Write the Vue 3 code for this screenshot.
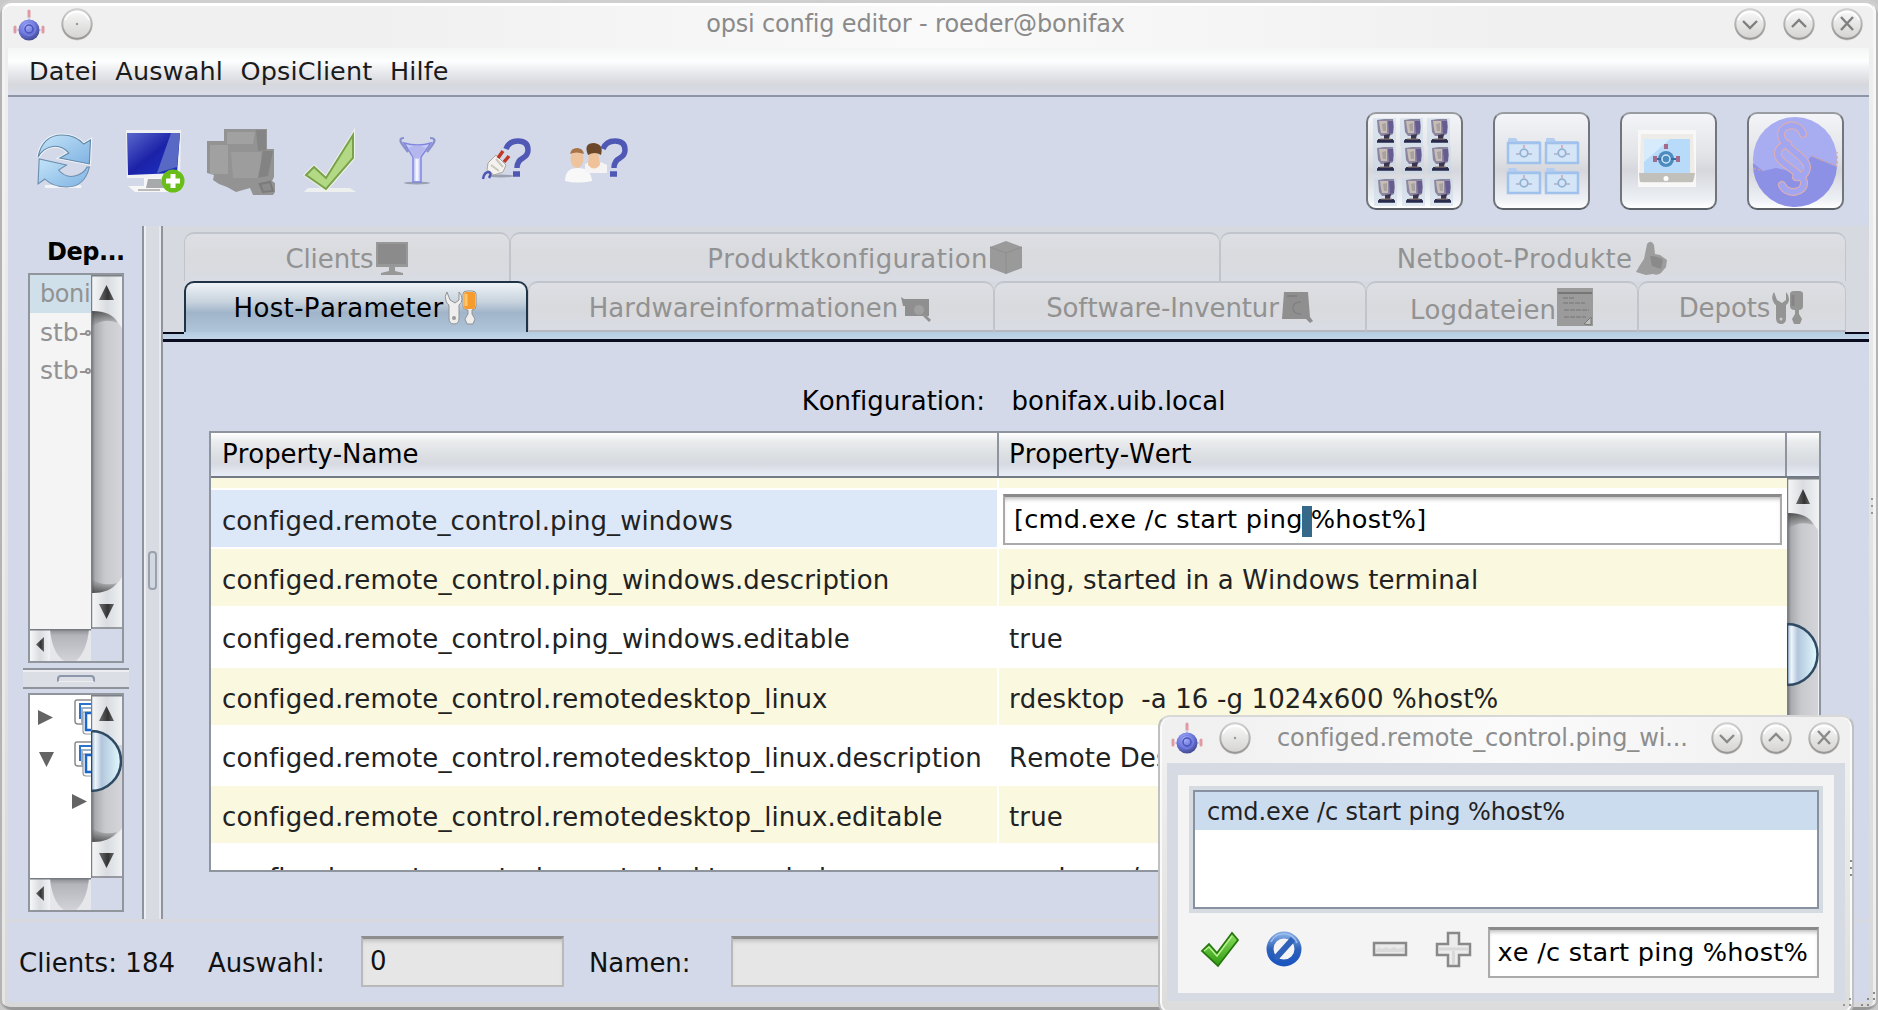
<script setup>
const menus = ['Datei', 'Auswahl', 'OpsiClient', 'Hilfe']
const rows = [
  { name: 'configed.remote_control.ping_windows', value: '', kind: 'sel' },
  { name: 'configed.remote_control.ping_windows.description', value: 'ping, started in a Windows terminal', kind: 'odd' },
  { name: 'configed.remote_control.ping_windows.editable', value: 'true', kind: 'even' },
  { name: 'configed.remote_control.remotedesktop_linux', value: 'rdesktop  -a 16 -g 1024x600 %host%', kind: 'odd' },
  { name: 'configed.remote_control.remotedesktop_linux.description', value: 'Remote Desktop', kind: 'even' },
  { name: 'configed.remote_control.remotedesktop_linux.editable', value: 'true', kind: 'odd' },
  { name: 'configed.remote_control.remotedesktop_windows', value: 'cmd.exe /c start', kind: 'even' },
]
const pcs = [[10, 5], [37, 5], [64, 5], [10, 33], [38, 33], [65, 33], [11, 65], [39, 65], [67, 65]]
const folders = [[13, 27], [51, 27], [13, 57], [51, 57]]
const winButtons = ['M9 13 L16 20 L23 13', 'M9 19 L16 12 L23 19', 'M10 9 L22 22 M22 9 L10 22']
</script>

<template>
  <div class="window">
    <svg width="0" height="0" class="defs">
      <defs>
        <linearGradient id="btn" x1="0" y1="0" x2="0" y2="1"><stop offset="0" stop-color="#fafafa" /><stop offset="1" stop-color="#d4d3d2" /></linearGradient>
        <linearGradient id="rim" x1="0" y1="0" x2="0" y2="1"><stop offset="0" stop-color="#cfcfcf" /><stop offset="1" stop-color="#979593" /></linearGradient>
        <linearGradient id="screen" x1="0" y1="0" x2="1" y2="1"><stop offset="0" stop-color="#5a68cc" /><stop offset=".5" stop-color="#1c22a8" /><stop offset="1" stop-color="#1a36c8" /></linearGradient>
        <linearGradient id="refresh" x1="0" y1="0" x2="1" y2="1"><stop offset="0" stop-color="#c3e4f8" /><stop offset="1" stop-color="#7fb2e2" /></linearGradient>
        <linearGradient id="green" x1="0" y1="0" x2="0" y2="1"><stop offset="0" stop-color="#8be05f" /><stop offset="1" stop-color="#2f9a10" /></linearGradient>
        <linearGradient id="blue" x1="0" y1="0" x2="0" y2="1"><stop offset="0" stop-color="#7fa8e2" /><stop offset=".5" stop-color="#2e62ba" /><stop offset="1" stop-color="#1b55c0" /></linearGradient>
        <linearGradient id="knob" x1="0" y1="0" x2="1" y2="0"><stop offset="0" stop-color="#9bb5cf" /><stop offset=".15" stop-color="#eef5fa" /><stop offset=".35" stop-color="#b2c6dc" /><stop offset="1" stop-color="#e2fbff" /></linearGradient>
        <linearGradient id="track" x1="0" y1="0" x2="1" y2="0"><stop offset="0" stop-color="#6c6d70" /><stop offset=".13" stop-color="#a9abaf" /><stop offset=".45" stop-color="#c8c9cd" /><stop offset="1" stop-color="#d4d5da" /></linearGradient>
        <linearGradient id="track2" x1="0" y1="0" x2="0" y2="1"><stop offset="0" stop-color="#86888c" /><stop offset=".2" stop-color="#b4b5ba" /><stop offset="1" stop-color="#d2d3d8" /></linearGradient>
        <linearGradient id="cap" x1="0" y1="0" x2="1" y2="0"><stop offset="0" stop-color="#f6f7f8" /><stop offset=".5" stop-color="#d9dce0" /><stop offset="1" stop-color="#f0f2f5" /></linearGradient>
        <linearGradient id="shade" x1="0" y1="0" x2="0" y2="1"><stop offset="0" stop-color="#333" stop-opacity=".75" /><stop offset="1" stop-color="#555" stop-opacity="0" /></linearGradient>
        <linearGradient id="shadeUp" x1="0" y1="1" x2="0" y2="0"><stop offset="0" stop-color="#333" stop-opacity=".75" /><stop offset="1" stop-color="#555" stop-opacity="0" /></linearGradient>
        <linearGradient id="arrow" x1="0" y1="0" x2="1" y2="0"><stop offset="0" stop-color="#6a6c6e" /><stop offset=".6" stop-color="#333" /><stop offset="1" stop-color="#666" /></linearGradient>
        <radialGradient id="orb" cx=".4" cy=".3" r=".7"><stop offset="0" stop-color="#a9b4fa" /><stop offset=".6" stop-color="#6872da" /><stop offset="1" stop-color="#444c90" /></radialGradient>
        <g id="logo">
          <path d="M17 2v6M3 18v5M31 18v5" stroke="#e09aa4" stroke-width="3" stroke-linecap="round" />
          <path d="M5 21h24M17 8v4" stroke="#d0d0e0" stroke-width="2" />
          <circle cx="17" cy="21" r="10.500" fill="url(#orb)" />
          <circle cx="17" cy="20" r="4" fill="none" stroke="#4a54b8" stroke-width="1.500" /><circle cx="17" cy="20" r="6.500" fill="none" stroke="#7a84e6" />
        </g>
        <g id="disc">
          <circle cx="16" cy="17.500" r="15" fill="#aaa" opacity=".5" />
          <circle cx="16" cy="16" r="14.700" fill="url(#btn)" stroke="url(#rim)" stroke-width="2" />
          <path d="M4 12a13 13 0 0 1 24 0" fill="none" stroke="#fff" stroke-width="1.500" />
        </g>
        <g id="pc">
          <path d="M-3 -1h23v28h-23z" fill="#c6d8e8" opacity=".5" />
          <path d="M1 1l7 -1 9 0 1 8 -1 7 -4 2H5l-3-4z" fill="#8c86a0" /><path d="M3 2h8v12H5l-1-5z" fill="#c6beb6" /><path d="M12 2l5 0v12l-4 1z" fill="#665c92" />
          <path d="M6 5l4-1v8l-3 0z" fill="#a9a0a0" /><path d="M8 16l6-1-1 5h4v3H2v-3h6z" fill="#3b3550" /><path d="M1 22.500h17" stroke="#26284c" stroke-width="2.500" /><path d="M4 20h11" stroke="#8e7c70" stroke-width="1" />
        </g>
        <g id="folder">
          <path d="M2 6V2q0-1 1-1h7l2 3h22v22H1V6z" fill="#b5cef0" /><path d="M2 6h32v20H2z" fill="#d3e5f6" stroke="#9fc1ec" stroke-width="2.500" />
          <circle cx="18" cy="16" r="3.800" fill="none" stroke="#93b2d2" stroke-width="1.800" /><path d="M10 17h4M22 17h4" stroke="#b0aec8" stroke-width="1.600" /><path d="M18 8v3" stroke="#d4a0aa" stroke-width="1.500" />
        </g>
        <g id="pages">
          <path d="M1 3q0-2 2-2h20v24H4q-3 0-3-3z" fill="#fff" stroke="#8a8a8a" stroke-width="1.500" />
          <path d="M6 20V5h18" fill="none" stroke="#2c73cc" stroke-width="2" /><path d="M8 25V9h16" fill="none" stroke="#9cb0c8" stroke-width="2" />
          <path d="M9 13h15v22h-12q-3 0-3-3z" fill="#fff" stroke="#999" stroke-width="1.200" /><path d="M24 14H12v17h12" fill="none" stroke="#1c66c8" stroke-width="2.500" />
        </g>
        <g id="tools">
          <path d="M3 2q-3 4-1 9 1 3 3 4v13q0 6 5 6t5-6V15q3-2 3-6 0-4-3-7v8l-4 3-5-3z" /><path d="M19 4q0-3 4-3h5q4 0 4 3v12q0 4-4 4v4l3 5-2 5h-6l-2-5 3-5v-4q-5 0-5-4z" />
        </g>
      </defs>
    </svg>

    <header class="titlebar">
      <svg class="app-logo" width="34" height="36"><use href="#logo" /></svg>
      <svg class="pin" width="32" height="34"><use href="#disc" /><circle cx="16" cy="16" r="1.200" fill="#999" /></svg>
      <div class="title">opsi config editor - roeder@bonifax</div>
      <svg v-for="d in winButtons" :key="d" class="wbtn" width="32" height="34"><use href="#disc" /><path :d="d" fill="none" stroke="#7f7f7f" stroke-width="2.400" /></svg>
    </header>

    <div class="body">
      <nav class="menubar"><span v-for="m in menus" :key="m">{{ m }}</span></nav>

      <div class="toolbar">
        <svg class="tools-left" width="640" height="80" viewBox="0 0 640 80">
          <!-- reload -->
          <g transform="translate(-11 1) scale(1.140 1)">
            <path d="M42 63h32v3H42z" fill="#f2f3f6" />
            <path d="M36 35Q40 13 57 13q12 0 19 9l6-4-1 24-26-6 8-5q-7-9-16-6-7 2-11 10z" fill="url(#refresh)" stroke="#edf3f8" stroke-width="3" /><path d="M36 35Q40 13 57 13q12 0 19 9l6-4-1 24-26-6 8-5q-7-9-16-6-7 2-11 10z" fill="url(#refresh)" stroke="#6488a8" />
            <path d="M81 45q-4 20-20 20-12 0-19-8l-6 5 1-25 24 6-7 5q6 8 14 6 8-2 11-9z" fill="url(#refresh)" stroke="#6e8eb0" />
          </g>
          <!-- add client -->
          <path d="M118 9h55l-1 48h-53z" fill="#f0f1f2" /><path d="M119 12l53 0-3 40-49 2z" fill="url(#screen)" /><path d="M163 12h9l-3 34-20 6z" fill="#5769c4" />
          <path d="M136 57h21l2 7h9l-5 7h-36l-7-6h16z" fill="#f7f7f7" /><path d="M140 58h13l3 9h-18z" fill="#a6aaab" /><path d="M130 69h22" stroke="#bbb" stroke-width="2" />
          <circle cx="165" cy="60" r="11.500" fill="#68bd19" /><path d="M165 53v14M158 60h14" stroke="#fff" stroke-width="5" />
          <!-- disabled group -->
          <path d="M199 20h17V8h43v20h7v28l-2 4 3 2v9l-2 3h-20l-3-7-14 4-9-5-8-3-6-4 1-5-7-2z" fill="#939393" />
          <path d="M219 11h28l-2 12h-26zM202 24h18v29h-18z" fill="#a1a1a1" /><path d="M248 9h10v20l-8 1z" fill="#858585" /><path d="M223 31h30v26h-28z" fill="#9d9d9d" /><path d="M255 30h10l-5 25-10 2z" fill="#838383" /><path d="M250 62l12-2 4 10h-13z" fill="#8b8b8b" /><path d="M252 63l10-2 3 9-10 1z" fill="none" stroke="#7b7b7b" stroke-width="2" />
          <!-- confirm -->
          <path d="M300 67h42l6 4h-52z" fill="#eef0ef" /><path d="M298 54l8-8 12 11 27-43v23l-27 31z" fill="#b7dc89" stroke="#eef3e9" stroke-width="4" /><path d="M298 54l8-8 12 11 27-43v23l-27 31z" fill="#b4d984" stroke="#7aa24d" stroke-width="2" />
          <!-- filter -->
          <ellipse cx="409" cy="62" rx="13" ry="1.500" fill="#99a0b2" /><path d="M396 22l9 14v25h8V36l10-14q-13 4-27 0z" fill="#c9cdf4" stroke="#8187df" stroke-width="1.500" /><path d="M400 27q9-5 18 0l-7 10h-5z" fill="#b4b7ee" /><path d="M396 17q-6 0-2 6l6 8M422 17q7 0 3 6l-6 8" fill="none" stroke="#8790cb" stroke-width="2.200" /><path d="M409 38v22" stroke="#f2f4ff" stroke-width="3" />
          <!-- licence usage -->
          <ellipse cx="493" cy="55" rx="13" ry="1.500" fill="#9ba1b1" /><path d="M480 42l8-8 10 10-3 7-9 3-7-5z" fill="#f4f2ee" stroke="#aaa69e" /><path d="M483 44l8 6M488 38l7 8" stroke="#ccc7be" stroke-width="2" /><path d="M490 37l5-7M496 41l5-6" stroke="#bf3727" stroke-width="3.500" /><path d="M475 58q1-7 6-7 3 1 0 6" fill="none" stroke="#4e56b4" stroke-width="2.500" />
          <path id="q" d="M498 28q3-8 12-8 10 0 10 9 0 5-5 8-6 3-6 10M505 53h7" fill="none" stroke="#5058b6" stroke-width="5.500" />
          <!-- user info -->
          <path d="M557 60q0-13 13-13t14 13q-14 3-27 0z" fill="#f8f8f8" /><ellipse cx="569" cy="38" rx="6.500" ry="9" fill="#edc49d" /><path d="M562 33q1-6 7-6t7 6q-8-3-14 0z" fill="#a77448" />
          <path d="M577 52V43l5-2q6 7 11 0l6 3v8z" fill="#f5f3f3" /><path d="M581 31h9l2 13q-6 7-12 0z" fill="#efc29a" /><path d="M580 34q-5-12 6-12 10 1 7 12-6-4-13 0z" fill="#6c482b" />
          <use href="#q" x="97" />
        </svg>
        <div class="tools-right">
          <div class="bigbtn"><svg width="92" height="94"><g v-for="p in pcs" :key="p.join()" :transform="`translate(${p[0] - 2} ${p[1]})`"><use href="#pc" /></g></svg></div>
          <div class="bigbtn"><svg width="92" height="94"><g v-for="p in folders" :key="p.join()" :transform="`translate(${p[0] - 2} ${p[1] - 4})`"><use href="#folder" /></g></svg></div>
          <div class="bigbtn"><svg width="92" height="94"><path d="M16 16h58v57H16z" fill="#f8f8f8" /><path d="M19 20h52l2 44-4 5H20l-3-4z" fill="#eeece8" /><path d="M17 59h56l-2 9H18z" fill="#c2c0bb" /><path d="M22 25h46v34H22z" fill="#b8dbfa" /><path d="M22 25h26L22 48z" fill="#d6ecfc" /><circle cx="44" cy="45" r="8" fill="#4d8abe" /><circle cx="44" cy="45" r="4" fill="none" stroke="#cde7f7" stroke-width="1.500" /><path d="M44 30v5M33 42v6M56 42v6" stroke="#a46a8c" stroke-width="4" /><path d="M35 45h4M49 45h5" stroke="#326ea5" stroke-width="2" /><circle cx="44" cy="64.500" r="2.500" fill="#fff" /></svg></div>
          <div class="bigbtn"><svg width="92" height="94"><circle cx="46" cy="45" r="42" fill="#a8acf0" /><path d="M4 49l10 8 13-3 24 5 11-17 26 11A42 42 0 0 1 4 49z" fill="#8d91e6" /><path d="M4 54l10 3M62 42l26 10V38" fill="none" stroke="#cf9f9b" stroke-width="1.200" stroke-dasharray="3 2" />
            <g fill="none" stroke-linecap="round"><path id="para" d="M54 20C50 7 32 10 32 21C32 33 58 42 58 53C58 60 52 64 47 63M39 30C33 31 28 35 29 41C30 50 54 59 55 68C56 79 38 82 33 71" stroke="#d9aeb4" stroke-width="8" /><path d="M54 20C50 7 32 10 32 21C32 33 58 42 58 53C58 60 52 64 47 63M39 30C33 31 28 35 29 41C30 50 54 59 55 68C56 79 38 82 33 71" stroke="#a2a5ef" stroke-width="5.600" /></g></svg></div>
        </div>
      </div>

      <div class="main">
        <aside class="left">
          <div class="dep-title">Dep...</div>
          <div class="listbox depots">
            <div class="list-col">
              <ul><li class="active">boni</li><li>stb-<i></i></li><li>stb-<i></i></li></ul>
              <svg class="hscroll" width="61" height="32"><rect width="62" height="32" fill="#e5e7ea" /><rect width="20" height="32" fill="url(#cap)" /><path d="M14 8v15L6 15.500z" fill="url(#arrow)" /><path d="M20 0h39q-2 22-13 32H34Q22 24 20 0z" fill="url(#track2)" /><path d="M0 .8h62" stroke="#777b82" stroke-width="1.500" /></svg>
            </div>
            <div class="scroll-col">
              <svg width="31" height="354"><rect width="32" height="354" fill="url(#cap)" /><path d="M0 36q20 0 31 17v249q-9 16-31 16z" fill="url(#track)" /><path d="M1 36q20 0 26 12Q12 42 1 52z" fill="url(#shade)" /><path d="M1 318q18 0 25-10Q12 312 1 304z" fill="url(#shadeUp)" /><path d="M8 25h15l-7.500-15zM8 329h15l-7.500 15z" fill="url(#arrow)" /><path d="M.5 0v354M0 .8h32M0 353h32" stroke="#7d8086" stroke-width="1.500" /></svg>
            </div>
          </div>
          <div class="hsplit"><b></b></div>
          <div class="listbox tree">
            <div class="list-col">
              <svg width="61" height="183"><path d="M8 15v15l15-7.500zM9 57h15l-7.500 15zM42 99v15l15-7.500z" fill="#646464" /><use href="#pages" x="44" y="4" /><use href="#pages" x="44" y="46" /></svg>
              <svg class="hscroll" width="61" height="32"><rect width="62" height="32" fill="#e5e7ea" /><rect width="20" height="32" fill="url(#cap)" /><path d="M14 8v15L6 15.500z" fill="url(#arrow)" /><path d="M20 0h39q-2 22-13 32H34Q22 24 20 0z" fill="url(#track2)" /><path d="M0 .8h62" stroke="#777b82" stroke-width="1.500" /></svg>
            </div>
            <div class="scroll-col">
              <svg width="31" height="183"><rect width="32" height="184" fill="url(#cap)" /><path d="M0 50h31v83q-9 14-31 14z" fill="url(#track)" /><path d="M1 147q18 0 25-10Q12 141 1 133z" fill="url(#shadeUp)" /><path d="M0 36a30 30 0 0 1 0 60z" fill="url(#knob)" stroke="#2f4a63" stroke-width="2.500" /><path d="M8 26h15l-7.500-15zM8 158h15l-7.500 15z" fill="url(#arrow)" /><path d="M.5 0v36M.5 97v86M0 .8h32M0 182h32" stroke="#7d8086" stroke-width="1.500" /></svg>
            </div>
          </div>
        </aside>
        <div class="vsplit"><b></b></div>

        <section class="right">
          <div class="tabs">
            <div class="tabrow">
              <div class="tab t1"><span>Clients</span><svg width="34" height="34"><path d="M1 1h32v25H1zM14 26h6v4l8 2v2H6v-2l8-2z" fill="#989898" /><path d="M3 3h28v20H3z" fill="#8b8b8b" /></svg></div>
              <div class="tab wide t2"><span>Produktkonfiguration</span><svg width="34" height="34"><path d="M17 0l16 6v21l-16 6-16-6V6z" fill="#9a9a9a" /><path d="M1 6l16 6 16-6M17 12v21" fill="none" stroke="#8e8e8e" /></svg></div>
              <div class="tab wide t3"><span>Netboot-Produkte</span><svg width="36" height="34"><path d="M14 3q4-5 7 1l1 9 5 1 7 5-1 7-5 6q-4 3-8 1l-7 1-10-3 4-7 4-6z" fill="#9d9d9d" /><path d="M17 15q8 0 13 4l-2 9-9-3z" fill="#8a8a8a" /></svg></div>
            </div>
            <div class="tabrow second">
              <div class="tab wide u1"><span>Host-Parameter</span><svg width="34" height="36"><g fill="#eee" stroke="#929292"><use href="#tools" /></g><rect x="20" y="2" width="11" height="17" rx="2" fill="#f79b2c" /><path d="M22 4v12" stroke="#ffc770" stroke-width="3" /><circle cx="10" cy="28" r="2" fill="#999" /></svg></div>
              <div class="tab u2"><span>Hardwareinformationen</span><svg width="34" height="34"><path d="M2 7l3 2h25v17H6V16H4z" fill="#8f8f8f" /><circle cx="20" cy="20" r="5" fill="#a0a0a0" /><path d="M24 24l7 7" stroke="#929292" stroke-width="3" /></svg></div>
              <div class="tab u3"><span>Software-Inventur</span><svg width="34" height="34"><path d="M4 2h24l2 25 3 4-3 2-4-4H2z" fill="#8f8f8f" /><path d="M7 6h10" stroke="#7d7d7d" stroke-width="1.500" /><path d="M21 12q-8 0-8 6t8 6" fill="none" stroke="#828282" stroke-width="1.500" /></svg></div>
              <div class="tab u4"><span>Logdateien</span><svg width="37" height="38"><path d="M0 0h36v38H0z" fill="#9b9b9b" /><path d="M1 5h34" stroke="#777" stroke-width="2" /><path d="M6 10h12M6 15h22M7 22h25M7 29h22" stroke="#828282" stroke-width="1.500" stroke-dasharray="5 1" /><path d="M27 36l7-7v8z" fill="#c0c0c0" stroke="#777" /></svg></div>
              <div class="tab u5"><span>Depots</span><svg width="34" height="36"><g fill="#949494"><use href="#tools" /></g><path d="M22 5v11" stroke="#858585" stroke-width="3" /><circle cx="10" cy="29" r="1.500" fill="#ccc" /></svg></div>
            </div>
          </div>
          <div class="tab-line"></div>

          <div class="conf"><span class="conf-l">Konfiguration:</span><span class="conf-r">bonifax.uib.local</span></div>

          <div class="table">
            <div class="thead"><div class="c1">Property-Name</div><div class="c2">Property-Wert</div><div class="c3"></div></div>
            <div class="tbody">
              <div class="trows">
                <div class="strip"><div class="c1"></div><div class="c2"></div></div>
                <div v-for="r in rows" :key="r.name" class="tr" :class="r.kind">
                  <div class="c1">{{ r.name }}</div>
                  <div v-if="r.kind === 'sel'" class="edit"><div class="field">[cmd.exe /c start ping<mark>&nbsp;</mark>%host%]</div></div>
                  <div v-else class="c2">{{ r.value }}</div>
                </div>
              </div>
              <svg class="tscroll" width="32" height="393"><rect width="32" height="393" fill="url(#cap)" /><path d="M0 35q20 0 31 17v341H0z" fill="url(#track)" /><path d="M1 35q20 0 26 12Q12 42 1 51z" fill="url(#shade)" /><path d="M0 146a30.500 30.500 0 0 1 0 61z" fill="url(#knob)" stroke="#2f4a63" stroke-width="2.500" /><path d="M9 26h14l-7-15z" fill="url(#arrow)" /><path d="M.5 0v145M.5 208v185M0 .8h32" stroke="#7d8086" stroke-width="1.500" /></svg>
            </div>
          </div>
        </section>
      </div>

      <footer class="status">
        <span class="s1">Clients: 184</span><span class="s2">Auswahl:</span><div class="inp i1">0</div><span class="s3">Namen:</span><div class="inp i2"></div>
      </footer>
    </div>
    <svg class="grip" width="6" height="18"><path d="M3 1v2M3 8v2M3 15v2" stroke="#999" stroke-width="2" /></svg>
    <svg class="corner" width="22" height="16"><path d="M17 1h2M17 7h2M11 7h2M5 13h2M11 13h2" stroke="#888" stroke-width="2" /></svg>

    <div class="popup">
      <header class="ptitle">
        <svg class="plogo" width="34" height="36"><use href="#logo" /></svg>
        <svg class="ppin" width="32" height="34"><use href="#disc" /><circle cx="16" cy="16" r="1.200" fill="#999" /></svg>
        <div class="ptext">configed.remote_control.ping_wi...</div>
        <svg v-for="d in winButtons" :key="d" class="wbtn" width="32" height="34"><use href="#disc" /><path :d="d" fill="none" stroke="#8a8a8a" stroke-width="2.400" /></svg>
      </header>
      <div class="pbody">
        <div class="panel">
          <div class="plist"><div>cmd.exe /c start ping %host%</div></div>
          <div class="pactions">
            <svg width="285" height="44" viewBox="0 0 285 44">
              <path d="M13 20l7-7 8 9 15-20 6 7-20 26z" fill="url(#green)" stroke="#28780f" stroke-width="1.800" /><path d="M15 20l5-4 8 9L43 5" fill="none" stroke="#b6f08f" stroke-width="1.500" />
              <circle cx="95" cy="18" r="14" fill="none" stroke="url(#blue)" stroke-width="7" /><path d="M86 28l18-20" stroke="#2f62b8" stroke-width="6" /><path d="M82 11a14 14 0 0 1 26 1" fill="none" stroke="#9dbdec" stroke-width="1.500" />
              <path d="M185 12h32v12h-32z" fill="#e9e9e9" stroke="#898989" stroke-width="2.500" /><path d="M187 19l3-3 3 2 4-2 4 2 4-2 4 2 6-2v5h-28z" fill="#dadada" />
              <path d="M259 2h11v11h11v11h-11v11h-11V24h-11V13h11z" fill="#ececec" stroke="#898989" stroke-width="2.500" /><path d="M250 18h30M264.500 20v13" stroke="#d9d9d9" stroke-width="3" />
            </svg>
            <div class="pinput"><span>xe /c start ping %host%</span></div>
          </div>
        </div>
      </div>
      <svg class="pgrip" width="6" height="18"><path d="M3 1v2M3 8v2M3 15v2" stroke="#888" stroke-width="2" /></svg>
      <svg class="pcorner" width="16" height="16"><path d="M11 1h2M11 7h2M5 7h2M5 13h2" stroke="#999" stroke-width="2" /></svg>
    </div>
  </div>
</template>

<style>
body { margin: 0; overflow: hidden; background: #c9c9c9; }
</style>
<style scoped>
* { box-sizing: border-box; }
.window { position: relative; width: 1878px; height: 1010px; padding: 0 9px 8px 8px; overflow: hidden; display: flex; flex-direction: column; border-radius: 12px 12px 10px 10px; background: linear-gradient(#f0f0f0, #e9e9e9 30%, #d8d8d8); box-shadow: inset 0 3px 0 #cfcfcf, inset 2px 0 0 #b4b4b4, inset -2px 0 0 #b4b4b4, inset 0 -3px 0 #979797, inset 5px 6px 0 #fbfbfb66, inset -5px 0 0 #fbfbfb99; font: 26px "DejaVu Sans", sans-serif; font-kerning: none; font-variant-ligatures: none; color: #000; white-space: pre; }
.defs { position: absolute; }
svg { display: block; flex: none; overflow: hidden; }
.titlebar { height: 48px; flex: none; margin: 0 -4px; display: flex; background: linear-gradient(90deg, #f0f0f0 20%, #fafafa 50%, #f0f0f0 80%); border-top: 3px solid #cfcfcf; border-radius: 8px 8px 0 0; box-shadow: inset 0 3px #fff; }
.app-logo { margin: 6px 0 0 8px; }
.pin { margin: 5px 0 0 15px; }
.title { width: 1641px; flex: none; text-align: center; font-size: 24px; letter-spacing: -.17px; line-height: 42px; color: #8a8a8a; padding-left: 4px; }
.wbtn { margin: 5px 16.500px 0 0; }
.body { flex: 1; display: flex; flex-direction: column; min-height: 0; background: #d3d9e9; }
.menubar { height: 49px; flex: none; display: flex; gap: 17.500px; padding-left: 21px; line-height: 46px; font-size: 25.500px; letter-spacing: .15px; color: #1b1b1b; background: linear-gradient(#f4f5f5, #fdfefe 28%, #e5e7eb 55%, #d6d8dd 78%, #d9dde8); border-bottom: 2px solid #8d96a6; }
.toolbar { height: 126px; flex: none; display: flex; justify-content: space-between; padding: 15px 25px 0 0; }
.tools-left { margin: 9px 0 0 0; }
.tools-right { display: flex; gap: 30px; }
.bigbtn { width: 97px; height: 98px; border: 2.500px solid; border-color: #999da1 #72767c #5b5f66; border-radius: 10px; background: linear-gradient(#f3f4f7, #e2e3e7 45%, #d5d7dc 60%, #eceff3 90%, #fff); overflow: hidden; }
.main { height: 696px; flex: none; display: flex; }
.left { width: 134px; flex: none; padding: 12px 0 0 15px; }
.dep-title { font-weight: bold; font-size: 24px; letter-spacing: -.5px; line-height: 34px; height: 38px; padding-left: 24px; }
.listbox { margin-left: 5px; width: 96px; border: 2px solid #91959c; display: flex; background: #d3d9e9; }
.depots { height: 390px; }
.list-col { width: 61px; background: #f4f4f4; display: flex; flex-direction: column; overflow: hidden; height: 100%; }
.list-col ul { list-style: none; margin: 0; padding: 0; flex: 1; }
.list-col li { height: 38px; line-height: 37px; padding-left: 10px; color: #929292; overflow: hidden; letter-spacing: 0; font-size: 25px; display: flex; align-items: center; }
.list-col li.active { background: #cfe0ea; font-size: 24px; letter-spacing: -.4px; }
.list-col li i { width: 6px; height: 6px; flex: none; border: 2px solid #929292; border-radius: 3px; margin: 1px 0 0 -3px; }
.tree .list-col { background: #fff; }
.scroll-col { width: 31px; }
.hscroll { margin-top: auto; }
.hsplit { width: 106px; height: 21px; margin: 5px 0 4px; background: #dbdee5; border: 2px solid #8f939b; border-width: 2px 0; box-shadow: inset 0 2px #eceef2; padding: 5px 34px; }
.hsplit b { display: block; height: 7px; border: 2px solid #8c97aa; border-bottom: 1px solid #eee; border-radius: 4px 4px 0 0; }
.tree { height: 219px; }
.vsplit { width: 21px; flex: none; margin-top: 3px; background: #d8dbe2; border: 2px solid #8f939b; border-width: 0 2px; box-shadow: inset 2px 0 #eceef2, inset -2px 0 #e6e8ee; padding: 325px 4px 0 4px; }
.vsplit b { display: block; height: 39px; border: 2px solid #9aa1ae; border-radius: 4px; background: #d3d7e0; }
.right { flex: 1; min-width: 0; }
.tabs { margin-top: 3px; height: 106px; padding: 6px 24px 0 21px; background: #d6d9df; }
.tabrow { display: flex; height: 49px; }
.tabrow.second { height: 51px; }
.tab { border: 2px solid #c1c5cb; border-bottom: 0; border-left-width: 1px; border-right-width: 1px; border-radius: 10px 10px 0 0; display: flex; justify-content: center; color: #929292; background: linear-gradient(#dddfe4, #d9dadd 50%, #d9dce4); line-height: 50px; flex: none; }
.wide { letter-spacing: .35px; }
.second .tab { line-height: 51px; border-bottom: 2px solid #b5b8be; }
.tab svg { margin: 7px 0 0 1px; }
.t1 { width: 326px; letter-spacing: -.1px; } .t2 { width: 710px; } .t3 { width: 626px; }
.second .u1 { width: 344px; border: 2px solid #1f3347; border-bottom: 0; color: #000; background: linear-gradient(#eff3f6, #c5d1dc 40%, #a1b5ca 60%, #afc5da); }
.u2 { width: 466px; } .u3 { width: 372px; letter-spacing: -.1px; } .u4 { width: 272px; letter-spacing: .1px; } .u5 { width: 208px; letter-spacing: -.1px; }
.u4 span { padding-top: 2px; } .u4 svg { margin: 5px 0 0 1px; }
.tab-line { height: 10px; background: linear-gradient(90deg, #080818 21px, transparent 21px, transparent 1682px, #080818 1682px) 0 0 / 100% 2px no-repeat, linear-gradient(#b3cbe0, #c3d5e8); border-bottom: 3px solid #0a0d20; }
.conf { height: 89px; padding-top: 44px; display: flex; line-height: 30px; }
.conf-l { width: 822px; text-align: right; letter-spacing: -.05px; }
.conf-r { margin-left: 26.500px; }
.table { margin-left: 46px; width: 1612px; height: 441px; border: 2px solid #8f959e; background: #fff; display: flex; flex-direction: column; overflow: hidden; }
.thead { display: flex; height: 45px; flex: none; line-height: 43px; letter-spacing: -.05px; border-bottom: 2px solid #747a84; background: linear-gradient(#fff, #e9ebed 20%, #d9dce0 60%, #d7dae1 72%, #e9edf7); }
.thead .c1, .thead .c2 { border-right: 2px solid #8f959e; }
.c1 { width: 788px; padding-left: 11px; flex: none; } .c2 { width: 788px; padding-left: 10px; flex: none; }
.tbody { display: flex; flex: 1; min-height: 0; overflow: hidden; }
.trows { width: 1577px; flex: none; color: #222; }
.strip { height: 12px; border-bottom: 2px solid #fff; display: flex; background: #faf8de; }
.strip .c1, .tr .c1 { border-right: 2px solid #fff; width: 788px; }
.tr { display: flex; height: 59.200px; border-bottom: 2px solid #fff; line-height: 63px; letter-spacing: .13px; }
.tr:last-child { line-height: 66px; }
.tr.odd { background: #faf8de; }
.tr.sel .c1 { background: #dce8f8; letter-spacing: .07px; }
.edit { padding: 4px 0 2px 4px; }
.field { width: 779px; height: 51px; border: 2px solid #aaa; border-top: 3px solid #8a8a8a; box-shadow: inset 0 4px 4px -2px #bbb; padding-left: 9px; line-height: 45px; color: #000; font-size: 25.600px; letter-spacing: .28px; }
.field mark { background: #36688a; display: inline-block; width: 10px; height: 31px; line-height: 31px; margin: 0 -1px; vertical-align: middle; }
.tscroll { margin-left: -1px; }
.status { flex: 1; border-top: 3px solid #d7d9df; display: flex; color: #111; line-height: 83px; letter-spacing: -.1px; }
.s1 { width: 188px; padding-left: 11px; letter-spacing: .05px; } .s2 { width: 165px; padding-left: 12px; } .s3 { width: 167px; padding-left: 25px; }
.inp { height: 51px; margin-top: 14px; background: #e6e6e6; border: 2px solid #b9b9b9; border-top: 3px solid #8e8e8e; box-shadow: inset 0 4px 4px -2px #bbb; line-height: 45px; padding-left: 7px; }
.i1 { width: 203px; } .i2 { width: 1100px; }
.grip { position: absolute; left: 1869px; top: 497px; }
.corner { position: absolute; right: 0; bottom: 2px; }

.popup { position: absolute; left: 1158px; top: 715px; width: 696px; height: 300px; border-radius: 12px; padding: 0 8px 0; background: linear-gradient(#f3f3f3, #dcdcdc); border: 2px solid #c0c0c0; border-top-color: #d8d8d8; box-shadow: inset 0 0 0 2px #fafafa; }
.ptitle { height: 46px; display: flex; background: linear-gradient(90deg, #f0f0f0 5%, #fbfbfb 50%, #f0f0f0 95%); margin: 0 -6px; border-radius: 10px 10px 0 0; }
.plogo { margin: 5px 0 0 8px; } .ppin { margin: 5px 0 0 15px; }
.ptext { width: 460px; padding-left: 26px; font-size: 24px; line-height: 42px; color: #8d8d8d; letter-spacing: -.12px; flex: none; }
.ptitle .wbtn { margin: 5px 16.700px 0 0; }
.pbody { height: 238px; background: #d6dae3; padding: 12px 10px 0 11px; margin: 0 -1px 0 -1px; }
.panel { height: 218px; width: 656px; background: #f4f4f4; padding: 11px; }
.plist { border: 2px solid #8791a0; outline: 4px solid #d6dbe2; margin: 4px 0 0 4px; width: 626px; height: 119px; background: #fff; }
.plist div { height: 38px; background: #ccdcef; font-size: 24px; letter-spacing: -.1px; line-height: 40px; padding-left: 12px; color: #222; }
.pactions { display: flex; padding-top: 18px; }
.pactions svg { margin: 4px 14px 0 0; }
.pinput { width: 331px; height: 51px; background: #fff; border: 2px solid #aaa; border-top: 3px solid #8a8a8a; box-shadow: inset 0 4px 4px -2px #bbb; display: flex; justify-content: flex-end; padding-right: 9px; line-height: 45px; font-size: 25.600px; letter-spacing: .22px; }
.pgrip { position: absolute; left: 688px; top: 142px; }
.pcorner { position: absolute; left: 678px; top: 281px; }
</style>
